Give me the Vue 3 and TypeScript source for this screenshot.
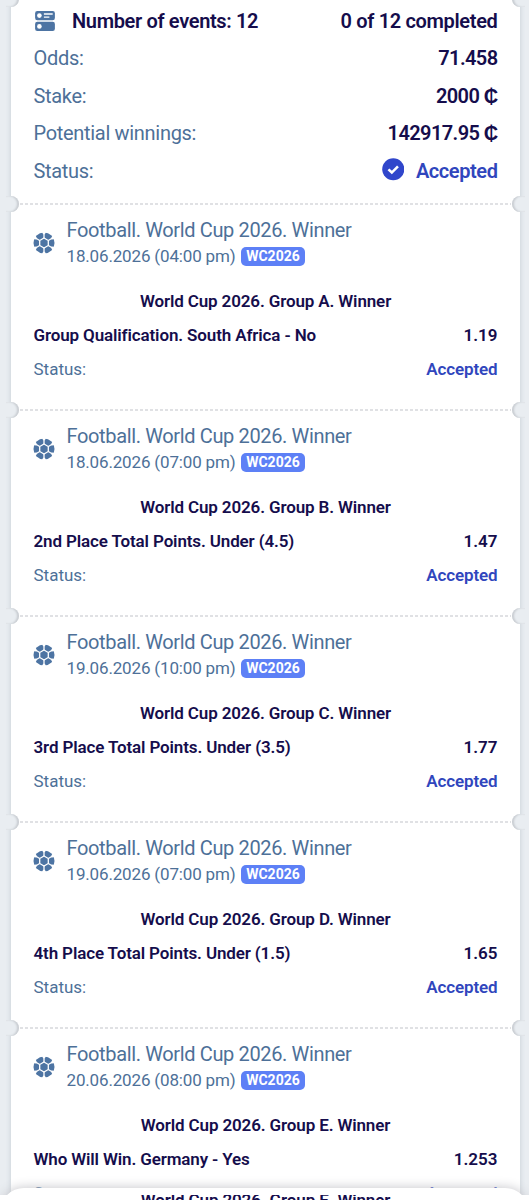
<script setup lang="ts">
interface BetEvent {
  date: string
  group: string
  pick: string
  odds: string
}

const summary = [
  { label: 'Odds:', value: '71.458' },
  { label: 'Stake:', value: '2000 ₵' },
  { label: 'Potential winnings:', value: '142917.95 ₵' },
]

const events: BetEvent[] = [
  { date: '18.06.2026 (04:00 pm)', group: 'A', pick: 'Group Qualification. South Africa - No', odds: '1.19' },
  { date: '18.06.2026 (07:00 pm)', group: 'B', pick: '2nd Place Total Points. Under (4.5)', odds: '1.47' },
  { date: '19.06.2026 (10:00 pm)', group: 'C', pick: '3rd Place Total Points. Under (3.5)', odds: '1.77' },
  { date: '19.06.2026 (07:00 pm)', group: 'D', pick: '4th Place Total Points. Under (1.5)', odds: '1.65' },
  { date: '20.06.2026 (08:00 pm)', group: 'E', pick: 'Who Will Win. Germany - Yes', odds: '1.253' },
]

const seams = [0, 60, 120, 180, 240, 300]
</script>

<template>
  <main class="screen">
    <div class="ticket">
      <section class="summary">
        <i class="notch left top" /><i class="notch right top" />
        <div class="row head">
          <svg class="list-icon" viewBox="0 0 20 20">
            <rect x="1" y="1" width="18" height="8.3" rx="2" fill="#4d74a3" />
            <rect x="1" y="10.7" width="18" height="8.3" rx="2" fill="#4d74a3" />
            <circle cx="4.9" cy="5.1" r="2.1" fill="#fff" />
            <circle cx="4.9" cy="14.9" r="2.1" fill="#fff" />
            <path d="M9 3.7h8M9 6.5h5" stroke="#fff" stroke-width="1.3" />
          </svg>
          <strong class="count">Number of events: 12</strong>
          <strong>0 of 12 completed</strong>
        </div>
        <div v-for="item in summary" :key="item.label" class="row">
          <span>{{ item.label }}</span><strong class="amount">{{ item.value }}</strong>
        </div>
        <div class="row">
          <span>Status:</span>
          <strong class="accepted">
            <svg class="check" viewBox="0 0 22 22">
              <circle cx="11" cy="11" r="10.8" fill="#3046cb" />
              <path d="M6.3 11.1l3.3 3.1 6-6.1" fill="none" stroke="#fff" stroke-width="2.5" />
            </svg>Accepted
          </strong>
        </div>
      </section>

      <article v-for="event in events" :key="event.group" class="event">
        <i class="notch left" /><i class="notch right" />
        <svg class="seam" width="491" height="2"><path d="M0 1h491" stroke="#d6d7dc" stroke-width="1.4" stroke-dasharray="3 2" /></svg>
        <header class="title">
          <svg class="ball" viewBox="-11 -11 22 22">
            <circle r="10.5" fill="#4d74a3" />
            <g stroke="#fff" stroke-width="1.3">
              <path d="M0-5l4.3 2.5v5L0 5l-4.3-2.5v-5z" fill="#4d74a3" />
              <path v-for="angle in seams" :key="angle" d="M0-5V-8.4" :transform="`rotate(${angle})`" />
            </g>
            <path v-for="angle in seams" :key="angle" d="M-2-11L-.6-8.2H.6L2-11z" :transform="`rotate(${angle})`" fill="#fff" />
          </svg>
          <div>
            <div class="league">Football. World Cup 2026. Winner</div>
            <div class="date">{{ event.date }}<b class="badge">WC2026</b></div>
          </div>
        </header>
        <div class="match">World Cup 2026. Group {{ event.group }}. Winner</div>
        <div class="line bold"><span>{{ event.pick }}</span><span class="odds">{{ event.odds }}</span></div>
        <div class="line"><span>Status:</span><strong class="accepted">Accepted</strong></div>
      </article>
    </div>
    <div class="sheet-clip"><div class="sheet" /></div>
    <div class="peek"><div class="peek-text">World Cup 2026. Group E. Winner</div></div>
  </main>
</template>

<style>
body { margin: 0; overflow: hidden; }
</style>

<style scoped>
.screen {
  position: relative;
  height: 1200px;
  overflow: hidden;
  background: #e9edf1;
  font-family: Roboto, sans-serif;
  color: #4d7098;
}
.ticket {
  height: 1200px;
  margin: 0 9px 0 11px;
  background: #fff;
  box-shadow: 0 0 5px #c5cbd2;
}
.summary {
  position: relative;
  box-sizing: border-box;
  height: 204px;
  padding: 2.4px 22.5px 0;
}
.row {
  display: flex;
  justify-content: space-between;
  align-items: center;
  height: 37.4px;
  font-size: 20px;
  letter-spacing: -0.31px;
}
.row strong { font-weight: 600; color: #150d4c; }
.head strong { letter-spacing: -0.34px; }
.row .amount { letter-spacing: -0.6px; }
.list-icon { width: 22px; height: 22px; margin-right: 16.5px; }
.count { flex: 1; }
strong.accepted, .row strong.accepted { color: #3046bd; font-weight: 600; }
.line .accepted { letter-spacing: -0.13px; }
.row .accepted { display: flex; align-items: center; letter-spacing: -0.42px; }
.check { width: 22.5px; height: 22.5px; margin: -2px 11.5px 0 0; }
.event {
  position: relative;
  box-sizing: border-box;
  height: 206px;
  padding: 13px 22.5px 0;
}
.notch {
  position: absolute;
  z-index: 1;
  top: -8px;
  box-sizing: border-box;
  width: 13px;
  height: 16px;
  background: #e9edf1;
}
.left { left: -5px; border-radius: 0 8px 8px 0; box-shadow: inset -2px 0 2px #c9cdd2; }
.right { right: -5px; border-radius: 8px 0 0 8px; box-shadow: inset 2px 0 2px #c9cdd2; }
.top { top: -9px; }
.seam { position: absolute; top: -1px; left: 9px; }
.title { display: flex; height: 52px; }
.ball { width: 22px; height: 22px; margin: 14.5px 11.5px 0 -0.5px; }
.league { height: 26px; line-height: 26px; font-size: 20px; letter-spacing: -0.36px; }
.date { display: flex; align-items: center; height: 26px; font-size: 17px; letter-spacing: -0.16px; }
.badge {
  height: 19px;
  line-height: 19px;
  margin-left: 5.7px;
  padding: 0 5px;
  border-radius: 5px;
  background: #5d80f6;
  color: #fff;
  font-size: 14px;
  font-weight: 700;
  letter-spacing: 0;
}
.match {
  height: 34px;
  margin-top: 15px;
  line-height: 34px;
  text-align: center;
  font-size: 17px;
  letter-spacing: -0.13px;
  font-weight: 600;
  color: #150d4c;
}
.line {
  display: flex;
  justify-content: space-between;
  height: 34px;
  line-height: 34px;
  font-size: 17px;
}
.bold { font-weight: 600; letter-spacing: -0.13px; color: #150d4c; }
.odds { letter-spacing: 0; }
.sheet-clip { position: absolute; z-index: 2; left: 0; right: 0; top: 1170px; height: 25px; overflow: hidden; }
.sheet { height: 60px; margin: 17.5px 0 0; border-radius: 24px; background: #fff; box-shadow: 0 0 12px #c3c3c8; }
.peek { position: absolute; z-index: 3; left: 0; right: 0; top: 1195px; height: 5px; overflow: hidden; background: #fff; }
.peek-text { margin-top: -5px; line-height: 20px; padding-left: 2px; text-align: center; font-size: 17px; letter-spacing: -0.13px; font-weight: 600; color: #150d4c; }
</style>
